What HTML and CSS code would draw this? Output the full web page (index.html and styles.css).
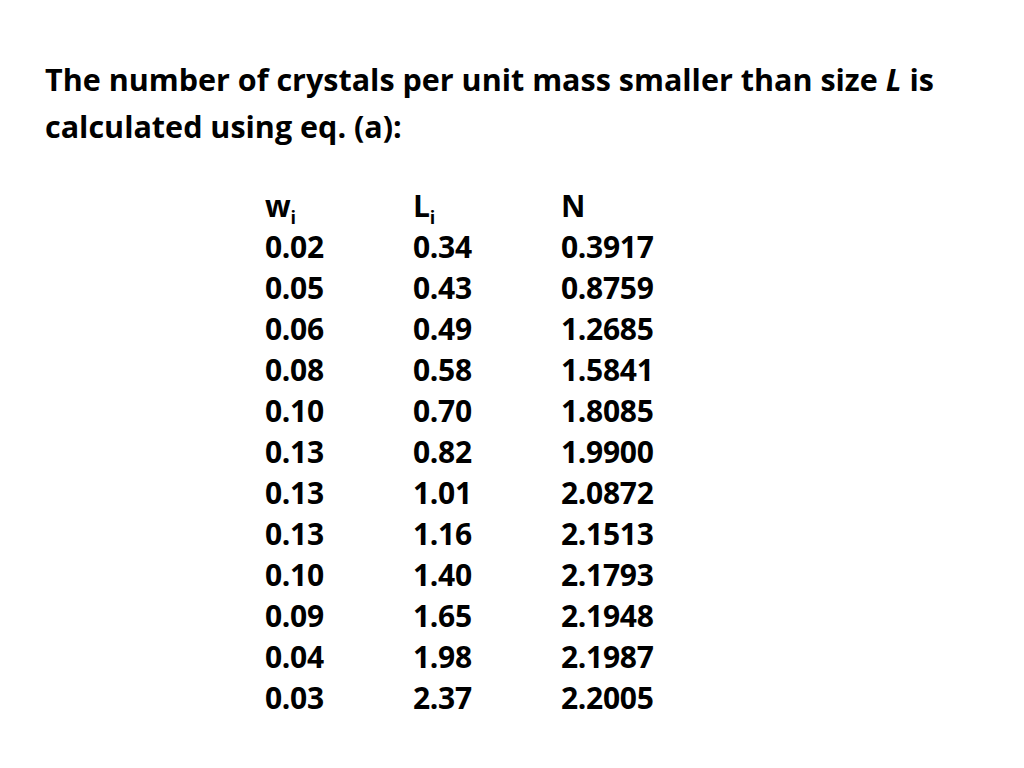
FILE: index.html
```html
<!DOCTYPE html>
<html>
<head>
<meta charset="utf-8">
<link rel="stylesheet" href="styles.css">
</head>
<body>
<div class="slide">
  <p class="title">The number of crystals per unit mass smaller than size <i>L</i> is<br>calculated using eq. (a):</p>
  <div class="table">
    <div class="cell">w<sub>i</sub></div><div class="cell">L<sub>i</sub></div><div class="cell">N</div>
    <div class="cell">0.02</div><div class="cell">0.34</div><div class="cell">0.3917</div>
    <div class="cell">0.05</div><div class="cell">0.43</div><div class="cell">0.8759</div>
    <div class="cell">0.06</div><div class="cell">0.49</div><div class="cell">1.2685</div>
    <div class="cell">0.08</div><div class="cell">0.58</div><div class="cell">1.5841</div>
    <div class="cell">0.10</div><div class="cell">0.70</div><div class="cell">1.8085</div>
    <div class="cell">0.13</div><div class="cell">0.82</div><div class="cell">1.9900</div>
    <div class="cell">0.13</div><div class="cell">1.01</div><div class="cell">2.0872</div>
    <div class="cell">0.13</div><div class="cell">1.16</div><div class="cell">2.1513</div>
    <div class="cell">0.10</div><div class="cell">1.40</div><div class="cell">2.1793</div>
    <div class="cell">0.09</div><div class="cell">1.65</div><div class="cell">2.1948</div>
    <div class="cell">0.04</div><div class="cell">1.98</div><div class="cell">2.1987</div>
    <div class="cell">0.03</div><div class="cell">2.37</div><div class="cell">2.2005</div>
  </div>
</div>
</body>
</html>
```
FILE: styles.css
```css
html, body {
  margin: 0;
  padding: 0;
  background: #ffffff;
}
.slide {
  width: 1024px;
  height: 768px;
  font-family: "Open Sans", "Noto Sans", sans-serif;
  font-weight: 700;
  color: #000000;
  padding: 56px 0 0 45px;
  box-sizing: border-box;
}
.title {
  margin: 0;
  white-space: nowrap;
  font-size: 30.5px;
  line-height: 47px;
  letter-spacing: 0;
}
.table {
  margin: 35px 0 0 220px;
  display: grid;
  grid-template-columns: 148px 148px 148px;
  font-size: 30px;
  line-height: 41px;
  letter-spacing: -0.3px;
}
.cell sub {
  font-size: 18px;
  line-height: 0;
  vertical-align: -7px;
}
```
